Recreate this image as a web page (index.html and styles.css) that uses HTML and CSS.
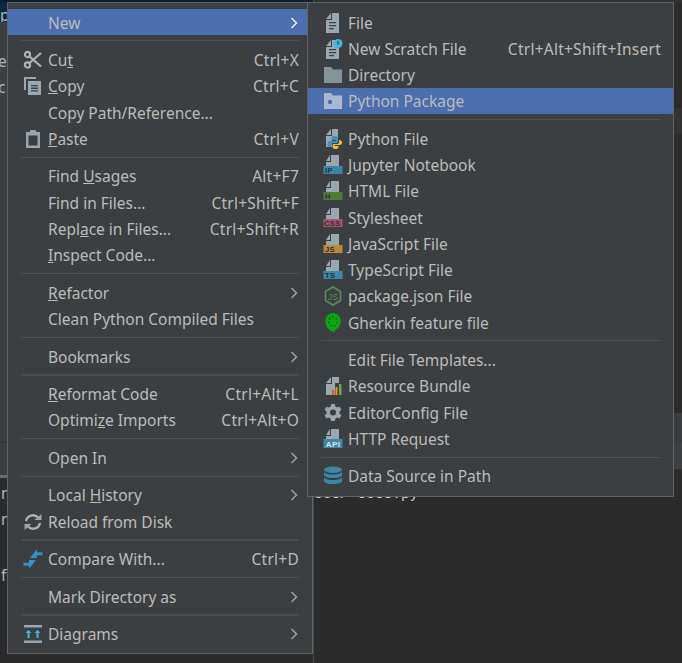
FILE: index.html
```html
<!DOCTYPE html>
<html lang="en">
<head>
<meta charset="utf-8">
<title>Context menu</title>
<link rel="stylesheet" href="styles.css">
</head>
<body>
<svg class="defs" width="0" height="0" aria-hidden="true">
  <symbol id="i-cut" viewBox="0 0 20 20">
    <g class="s-gray" fill="none" stroke-width="2.2">
      <circle cx="4.5" cy="4.5" r="2.6"/><circle cx="4.5" cy="15" r="2.6"/>
      <path d="M6.5 6.5 18 16.5M6.5 13 18 3"/>
    </g>
  </symbol>
  <symbol id="i-copy" viewBox="0 0 20 20">
    <path class="f-gray" d="M1 1H13V3H3V14H1Z"/>
    <path class="f-gray" d="M5 5H18V19H5Z"/>
    <path class="f-menu" d="M8 9H15V10.3H8ZM8 11.6H15V12.9H8ZM8 14.2H15V15.5H8Z"/>
  </symbol>
  <symbol id="i-paste" viewBox="0 0 20 20">
    <path class="f-gray" d="M3 3H7V1H13V3H17V19H3ZM5.5 6.5V16.5H14.5V6.5Z"/>
  </symbol>
  <symbol id="i-file" viewBox="0 0 20 20">
    <path class="f-gray" d="M9 0H16V20H3V7H9Z"/>
    <path class="f-gray" d="M8 0V6H3Z"/>
    <path class="f-menu" d="M6 9H13V10.3H6ZM6 12H13V13.3H6ZM6 15H11V16.3H6Z"/>
  </symbol>
  <symbol id="i-scratch" viewBox="0 0 20 20">
    <path class="f-gray" d="M9 1H14V6H16V20H3V8H9Z"/>
    <path class="f-gray" d="M8 1V7H3Z"/>
    <path class="f-menu" d="M6 10H13V11.3H6ZM6 13H13V14.3H6ZM6 16H11V17.3H6Z"/>
    <circle class="f-blue" cx="15" cy="4.5" r="4.5"/>
    <path class="f-menu" d="M14.4 2H15.6V5.6H14.4Z"/>
  </symbol>
  <symbol id="i-dir" viewBox="0 0 20 20">
    <path class="f-folder" d="M1 2H8L10 4.5H19V18H1Z"/>
  </symbol>
  <symbol id="i-pkg" viewBox="0 0 20 20">
    <path class="f-folder-on" d="M1 2H8L10 4.5H19V18H1Z"/>
    <circle class="f-sel" cx="7" cy="11" r="2.2"/>
  </symbol>
  <symbol id="i-py" viewBox="0 0 20 20">
    <path class="f-gray" d="M9 0H15V9H9V18H3V7H9Z"/>
    <path class="f-gray" d="M8 0V6H3Z"/>
    <path class="f-pyblue" d="M11.5 7C9 7 8.5 8 8.5 9.5V11H13V12H7C5.5 12 4.5 13 4.5 15 4.5 17 5.5 18 7 18H8.5V16C8.5 14.8 9.5 14 10.5 14H13.5C14.5 14 15 13.4 15 12.5V9.5C15 8 14 7 11.5 7Z"/>
    <path class="f-pyyellow" d="M16 11V13C16 14.5 15 15 14 15H11C10 15 9.5 15.6 9.5 16.5V18C9.5 19.5 11 20 12.5 20 14 20 15.5 19.5 15.5 18V17H11.5V16H16.5C18 16 19 15 19 13.5 19 12 18 11 16.5 11Z"/>
  </symbol>
  <symbol id="i-doc-top" viewBox="0 0 20 20">
    <path class="f-gray" d="M8 0H16V11H3V7H8Z"/>
    <path class="f-gray" d="M7 0V6H3Z"/>
  </symbol>
  <symbol id="i-node" viewBox="0 0 20 20">
    <path class="s-node" fill="none" stroke-width="1.6" d="M10 1 17.500 5.500V14.500L10 19 2.500 14.500V5.500Z"/>
    <text class="t-node" x="10" y="13.500" text-anchor="middle">JS</text>
  </symbol>
  <symbol id="i-gherkin" viewBox="0 0 20 20">
    <g transform="translate(1.500 0) scale(.85 .95)">
      <path class="f-gherkin" d="M10 0C15.500 0 19 3.800 19 8.800 19 14 15 17 12 18.500V20C7 20 1 15 1 9 1 3.800 4.500 0 10 0Z"/>
      <g class="f-gherkin-dot">
        <circle cx="10" cy="4" r="1"/><circle cx="14" cy="6" r="1"/><circle cx="14.800" cy="10" r="1"/>
        <circle cx="12" cy="13.500" r="1"/><circle cx="8" cy="13.500" r="1"/><circle cx="5.200" cy="10" r="1"/><circle cx="6" cy="6" r="1"/>
      </g>
    </g>
  </symbol>
  <symbol id="i-bundle" viewBox="0 0 20 20">
    <path class="f-gray" d="M9 1H16V7H12V19H3V8H9Z"/>
    <path class="f-gray" d="M8 1V7H3Z"/>
    <path class="f-orange1" d="M9 14H11V19H9Z"/>
    <path class="f-orange2" d="M12.500 11H14.500V19H12.500Z"/>
    <path class="f-green" d="M16 8H18.500V19H16Z"/>
  </symbol>
  <symbol id="i-gear" viewBox="0 0 20 20">
    <path class="f-gray" fill-rule="evenodd" d="M8.200 1H11.800L12.300 3.400 14.300 4.500 16.600 3.700 18.400 6.800 16.500 8.400V10.700L18.400 12.300 16.600 15.400 14.300 14.600 12.300 15.700 11.800 18.100H8.200L7.700 15.700 5.700 14.600 3.400 15.400 1.600 12.300 3.500 10.700V8.400L1.600 6.800 3.400 3.700 5.700 4.500 7.700 3.400ZM10 6.600A3 3 0 1 0 10 12.600 3 3 0 1 0 10 6.600Z"/>
  </symbol>
  <symbol id="i-db" viewBox="0 0 20 20">
    <g class="f-db">
      <ellipse cx="10" cy="3.800" rx="9" ry="3.200"/>
      <path d="M1 6C2.500 8 6 8.500 10 8.500S17.500 8 19 6V9.500C17.500 11.500 14 12 10 12S2.500 11.500 1 9.500Z"/>
      <path d="M1 11.500C2.500 13.500 6 14 10 14S17.500 13.500 19 11.500V15.500C17.500 17.500 14 18 10 18S2.500 17.500 1 15.500Z"/>
    </g>
  </symbol>
  <symbol id="i-reload" viewBox="0 0 20 20">
    <g class="s-gray" fill="none" stroke-width="2.300">
      <path d="M3 9A7 7 0 0 1 15 5.500"/>
      <path d="M17 11A7 7 0 0 1 5 14.500"/>
    </g>
    <path class="f-gray" d="M11.500 8H18.500V2ZM8.500 12H1.500V18Z"/>
  </symbol>
  <symbol id="i-compare" viewBox="0 0 20 20">
    <path class="f-arrow" d="M14 0V3.300H19.500V6.200H14V9H7Z"/>
    <path class="f-arrow" d="M6 20V16.700H0.500V13.800H6V11H13Z"/>
  </symbol>
  <symbol id="i-diagrams" viewBox="0 0 20 20">
    <path class="f-gray" d="M1 1H19V3.500H1ZM1 16.500H19V19H1Z"/>
    <path class="f-bright" d="M5.500 6 8.500 9H6.500V14H4.500V9H2.500ZM14.500 6 17.500 9H15.500V14H13.500V9H11.500Z"/>
  </symbol>
  <symbol id="i-chev" viewBox="0 0 8 12">
    <path fill="none" stroke="currentColor" stroke-width="1.500" d="M1.500 1 6.500 6 1.500 11"/>
  </symbol>
</svg>

<div class="ide">
  <div class="left">
    <div class="tree-selected"><span class="frag">p</span></div>
    <div class="tree">
      <div class="frag-row"><span class="frag frag--cut">es</span></div>
      <div class="frag-row"><span class="frag frag--cut">c</span></div>
    </div>
    <div class="toolbar"></div>
    <div class="console-left">
      <div class="frag-row"><span class="frag">n</span></div>
      <div class="frag-row"><span class="frag">n</span></div>
      <div class="frag-spacer"></div>
      <div class="frag-row"><span class="frag">f</span></div>
    </div>
  </div>
  <div class="right">
    <div class="tabs"></div>
    <div class="editor">
      <div class="gutter-mark"></div>
      <div class="editor-fill"></div>
      <div class="panel-head"></div>
      <div class="panel-head panel-head--light"></div>
    </div>
    <div class="console-right"><div class="console-line">ses/ cocs.py</div></div>
  </div>
</div>

<nav class="menu menu--main">
  <div class="row is-active"><span class="slot"></span><span class="label">New</span><svg class="chev"><use href="#i-chev"/></svg></div>
  <div class="sep"></div>
  <div class="row"><svg class="ico"><use href="#i-cut"/></svg><span class="label">Cu<u>t</u></span><span class="key">Ctrl+X</span></div>
  <div class="row"><svg class="ico"><use href="#i-copy"/></svg><span class="label"><u>C</u>opy</span><span class="key">Ctrl+C</span></div>
  <div class="row"><span class="slot"></span><span class="label">Copy Path/Reference...</span></div>
  <div class="row"><svg class="ico"><use href="#i-paste"/></svg><span class="label"><u>P</u>aste</span><span class="key">Ctrl+V</span></div>
  <div class="sep"></div>
  <div class="row"><span class="slot"></span><span class="label">Find <u>U</u>sages</span><span class="key">Alt+F7</span></div>
  <div class="row"><span class="slot"></span><span class="label">Find in Files...</span><span class="key">Ctrl+Shift+F</span></div>
  <div class="row"><span class="slot"></span><span class="label">Repl<u>a</u>ce in Files...</span><span class="key">Ctrl+Shift+R</span></div>
  <div class="row"><span class="slot"></span><span class="label"><u>I</u>nspect Code...</span></div>
  <div class="sep"></div>
  <div class="row"><span class="slot"></span><span class="label"><u>R</u>efactor</span><svg class="chev"><use href="#i-chev"/></svg></div>
  <div class="row"><span class="slot"></span><span class="label">Clean Python Compiled Files</span></div>
  <div class="sep"></div>
  <div class="row"><span class="slot"></span><span class="label">Bookmarks</span><svg class="chev"><use href="#i-chev"/></svg></div>
  <div class="sep sep--wide"></div>
  <div class="row"><span class="slot"></span><span class="label"><u>R</u>eformat Code</span><span class="key">Ctrl+Alt+L</span></div>
  <div class="row"><span class="slot"></span><span class="label">Optimi<u>z</u>e Imports</span><span class="key">Ctrl+Alt+O</span></div>
  <div class="sep"></div>
  <div class="row"><span class="slot"></span><span class="label">Open In</span><svg class="chev"><use href="#i-chev"/></svg></div>
  <div class="sep"></div>
  <div class="row"><span class="slot"></span><span class="label">Local <u>H</u>istory</span><svg class="chev"><use href="#i-chev"/></svg></div>
  <div class="row"><svg class="ico"><use href="#i-reload"/></svg><span class="label">Reload from Disk</span></div>
  <div class="sep sep--wide"></div>
  <div class="row"><svg class="ico"><use href="#i-compare"/></svg><span class="label">Compare With...</span><span class="key">Ctrl+D</span></div>
  <div class="sep"></div>
  <div class="row"><span class="slot"></span><span class="label">Mark Directory as</span><svg class="chev"><use href="#i-chev"/></svg></div>
  <div class="sep sep--wide"></div>
  <div class="row"><svg class="ico"><use href="#i-diagrams"/></svg><span class="label">Diagrams</span><svg class="chev"><use href="#i-chev"/></svg></div>
</nav>

<nav class="menu menu--sub">
  <div class="row"><svg class="ico"><use href="#i-file"/></svg><span class="label">File</span></div>
  <div class="row"><svg class="ico"><use href="#i-scratch"/></svg><span class="label">New Scratch File</span><span class="key">Ctrl+Alt+Shift+Insert</span></div>
  <div class="row"><svg class="ico"><use href="#i-dir"/></svg><span class="label">Directory</span></div>
  <div class="row is-active"><svg class="ico"><use href="#i-pkg"/></svg><span class="label">Python Package</span></div>
  <div class="sep"></div>
  <div class="row"><svg class="ico"><use href="#i-py"/></svg><span class="label">Python File</span></div>
  <div class="row"><svg class="ico" viewBox="0 0 20 20"><use href="#i-doc-top"/><rect class="band band--blue" x="0.500" y="11" width="19" height="8"/><text class="band-text" x="2" y="18">IP</text></svg><span class="label">Jupyter Notebook</span></div>
  <div class="row"><svg class="ico" viewBox="0 0 20 20"><use href="#i-doc-top"/><rect class="band band--green" x="0.500" y="11" width="19" height="8"/><text class="band-text" x="2" y="18">H</text></svg><span class="label">HTML File</span></div>
  <div class="row"><svg class="ico" viewBox="0 0 20 20"><use href="#i-doc-top"/><rect class="band band--rose" x="0.500" y="11" width="19" height="8"/><text class="band-text" x="1" y="18">CSS</text></svg><span class="label">Stylesheet</span></div>
  <div class="row"><svg class="ico" viewBox="0 0 20 20"><use href="#i-doc-top"/><rect class="band band--amber" x="0.500" y="11" width="19" height="8"/><text class="band-text" x="2" y="18">JS</text></svg><span class="label">JavaScript File</span></div>
  <div class="row"><svg class="ico" viewBox="0 0 20 20"><use href="#i-doc-top"/><rect class="band band--blue" x="0.500" y="11" width="19" height="8"/><text class="band-text" x="2" y="18">TS</text></svg><span class="label">TypeScript File</span></div>
  <div class="row"><svg class="ico"><use href="#i-node"/></svg><span class="label">package.json File</span></div>
  <div class="row"><svg class="ico"><use href="#i-gherkin"/></svg><span class="label">Gherkin feature file</span></div>
  <div class="sep"></div>
  <div class="row"><span class="slot"></span><span class="label">Edit File Templates...</span></div>
  <div class="row"><svg class="ico"><use href="#i-bundle"/></svg><span class="label">Resource Bundle</span></div>
  <div class="row"><svg class="ico"><use href="#i-gear"/></svg><span class="label">EditorConfig File</span></div>
  <div class="row"><svg class="ico" viewBox="0 0 20 20"><use href="#i-doc-top"/><rect class="band band--blue" x="0.500" y="10" width="19" height="9"/><text class="band-text band-text--api" x="10" y="17.800" text-anchor="middle">API</text></svg><span class="label">HTTP Request</span></div>
  <div class="sep"></div>
  <div class="row"><svg class="ico"><use href="#i-db"/></svg><span class="label">Data Source in Path</span></div>
</nav>
</body>
</html>
```

FILE: styles.css
```css
* { box-sizing: border-box; }
html, body { margin: 0; padding: 0; height: 100%; overflow: hidden; background: #2b2b2b; }
body { font-family: "Noto Sans", "Open Sans", sans-serif; font-size: 15.5px; color: #bbbbbb; position: relative; }
.defs { position: absolute; }

/* IDE behind the menus */
.ide { display: flex; height: 663px; }
.left { width: 313px; display: flex; flex-direction: column; }
.right { flex: 1; display: flex; flex-direction: column; border-left: 1px solid #4a4a4a; }
.tree-selected { height: 22px; background: #0d293e; border-top: 2px solid #0a1f30; padding-top: 2px; }
.tree { height: 421px; background: #3c3f41; padding-top: 26px; border-bottom: 1px solid #323232; }
.toolbar { height: 35px; background: #3c3f41; border-bottom: 3px solid #6a6d70; }
.console-left { flex: 1; background: #2b2b2b; padding-top: 2px; }
.frag-row { height: 26px; line-height: 26px; padding-left: 1px; white-space: nowrap; overflow: hidden; }
.frag-spacer { height: 30px; }
.frag { color: #a9b7c6; }
.frag--cut { margin-left: -3px; }

.tabs { height: 2px; background: #323232; }
.editor { height: 476px; display: flex; flex-direction: column; background: #2b2b2b; }
.gutter-mark { height: 26px; margin-top: 106px; background: #323232; flex: none; }
.editor-fill { height: 279px; flex: none; }
.panel-head { height: 30px; background: #3a3b3c; flex: none; }
.panel-head--light { height: 27px; background: #3e4042; border-bottom: 1px solid #333; }
.console-right { flex: 1; background: #2b2b2b; padding-top: 6px; }
.console-line { font-family: "Liberation Mono", monospace; font-size: 14.5px; line-height: 20px; color: #d0d0d0; }

/* Menus */
.menu { position: absolute; top: 2px; background: #3c3f41; border: 1px solid #616365; padding-top: 6px; }
.menu--main { left: 7px; width: 306px; height: 652px; }
.menu--sub { left: 307px; width: 367px; height: 495px; }
.row { display: flex; align-items: center; height: 26.25px; padding: 1px 13px 0 15px; white-space: nowrap; }
.row.is-active { background: #4b6eaf; }
.menu--sub .row { padding-right: 12px; }
.slot, .ico { flex: none; width: 20px; height: 20px; margin-right: 5px; }
.label { flex: none; }
.key { margin-left: auto; letter-spacing: .25px; }
.chev { margin-left: auto; flex: none; width: 8px; height: 12px; margin-right: 1px; color: #a0a0a0; }
.is-active .chev { color: #f0f0f0; }
.sep { height: 1px; margin: 5.150px 13px; background: #515151; }
.sep--wide { height: 2px; margin-top: 4.650px; margin-bottom: 4.650px; background: #4c4d4e; }

/* Icon paints */
.f-gray { fill: #9aa7b0; }
.s-gray { stroke: #afb1b3; }
.f-menu { fill: #3c3f41; }
.f-blue { fill: #40b6e0; }
.f-folder { fill: #87939a; }
.f-folder-on { fill: #a9b8d4; }
.f-sel { fill: #4b6eaf; }
.f-pyblue { fill: #3d8fc4; }
.f-pyyellow { fill: #f0c030; }
.s-node { stroke: #5a8a5d; }
.t-node { font-family: "Liberation Sans", sans-serif; font-size: 9px; fill: #5a8a5d; }
.f-gherkin { fill: #0aa80f; }
.f-gherkin-dot { fill: #1e5a20; }
.f-orange1 { fill: #e05a1c; }
.f-orange2 { fill: #f29020; }
.f-green { fill: #6aa84f; }
.f-db { fill: #3d86a8; }
.f-arrow { fill: #3592c4; }
.f-bright { fill: #40b6e0; }
.band--blue { fill: #3d87ab; }
.band--green { fill: #4d7c35; }
.band--rose { fill: #a9536c; }
.band--amber { fill: #b98a3c; }
.band-text { font-family: "Liberation Sans", sans-serif; font-size: 7.500px; font-weight: 700; letter-spacing: .4px; fill: #2c3033; }
.band-text--api { font-size: 8px; fill: #d7e6ee; }
```
